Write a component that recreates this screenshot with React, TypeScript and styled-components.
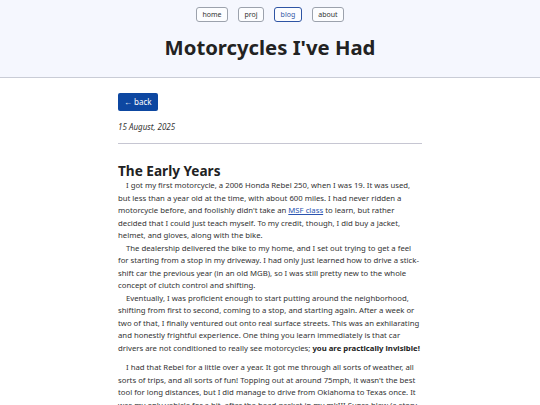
import React, { FC } from "react";
import styled, { createGlobalStyle } from "styled-components";

const GlobalStyle = createGlobalStyle`
  html, body {
    margin: 0;
    padding: 0;
    background: #ffffff;
    font-family: "Noto Sans", "Open Sans", sans-serif;
    color: #222;
  }
`;

const Header = styled.header`
  background: #f5f7fe;
  border-bottom: 1px solid #c9ccd6;
  padding: 7px 0 17px;
  display: flex;
  flex-direction: column;
  align-items: center;
`;

const Nav = styled.nav`
  display: flex;
  gap: 10px;
`;

const NavLink = styled.a<{ $active?: boolean }>`
  display: inline-block;
  font-size: 7px;
  line-height: 13px;
  padding: 0 5.5px;
  border: 1px solid ${(p) => (p.$active ? "#2f55a4" : "#9ca2ad")};
  border-radius: 3px;
  color: ${(p) => (p.$active ? "#2f55a4" : "#333")};
  background: #fcfdff;
  text-decoration: none;
`;

const Title = styled.h1`
  margin: 13px 0 0;
  font-size: 20.3px;
  line-height: 24.6px;
  font-weight: 700;
  color: #222;
`;

const Main = styled.main`
  width: 304px;
  margin: 0 auto;
  padding-top: 10px;
`;

const BackButton = styled.a`
  display: inline-block;
  background: #0d47a1;
  color: #fff;
  font-size: 8px;
  line-height: 18px;
  padding: 0 6px;
  border-radius: 2px;
  text-decoration: none;
`;

const PostDate = styled.p`
  margin: 10px 0 0;
  font-size: 8px;
  line-height: 12.8px;
  font-style: italic;
  color: #333;
`;

const Rule = styled.hr`
  border: none;
  border-top: 1px solid #c6c6d2;
  margin: 10px 0 0;
`;

const Heading = styled.h2`
  margin: 19px 0 0;
  font-size: 13.6px;
  line-height: 16px;
  font-weight: 700;
  color: #222;
`;

const Group = styled.div`
  margin-bottom: 7px;
`;

const Para = styled.p`
  margin: 0;
  text-indent: 8px;
  font-size: 7.75px;
  line-height: 12.5px;
  color: #333;

  strong {
    color: #222;
  }
`;

const Link = styled.a`
  color: #2a54b0;
  text-decoration: underline;
`;

const App: FC = () => {
  const links = ["home", "proj", "blog", "about"];
  return (
    <>
      <GlobalStyle />
      <Header>
        <Nav>
          {links.map((l) => (
            <NavLink key={l} href="#" $active={l === "blog"}>
              {l}
            </NavLink>
          ))}
        </Nav>
        <Title>Motorcycles I've Had</Title>
      </Header>
      <Main>
        <BackButton href="#">← back</BackButton>
        <PostDate>15 August, 2025</PostDate>
        <Rule />
        <Heading>The Early Years</Heading>
        <Group>
          <Para>
            I got my first motorcycle, a 2006 Honda Rebel 250, when I was 19. It
            was used, but less than a year old at the time, with about 600 miles.
            I had never ridden a motorcycle before, and foolishly didn't take an{" "}
            <Link href="#">MSF class</Link> to learn, but rather decided that I
            could just teach myself. To my credit, though, I did buy a jacket,
            helmet, and gloves, along with the bike.
          </Para>
          <Para>
            The dealership delivered the bike to my home, and I set out trying to
            get a feel for starting from a stop in my driveway. I had only just
            learned how to drive a stick-shift car the previous year (in an old
            MGB), so I was still pretty new to the whole concept of clutch control
            and shifting.
          </Para>
          <Para>
            Eventually, I was proficient enough to start putting around the
            neighborhood, shifting from first to second, coming to a stop, and
            starting again. After a week or two of that, I finally ventured out
            onto real surface streets. This was an exhilarating and honestly
            frightful experience. One thing you learn immediately is that car
            drivers are not conditioned to really see motorcycles;{" "}
            <strong>you are practically invisible!</strong>
          </Para>
        </Group>
        <Group>
          <Para>
            I had that Rebel for a little over a year. It got me through all sorts
            of weather, all sorts of trips, and all sorts of fun! Topping out at
            around 75mph, it wasn't the best tool for long distances, but I did
            manage to drive from Oklahoma to Texas once. It was my only vehicle
            for a bit, after the head gasket in my mkIII Supra blew (a story for
            another time), so it saw plenty of use.
          </Para>
        </Group>
      </Main>
    </>
  );
};

export default App;
